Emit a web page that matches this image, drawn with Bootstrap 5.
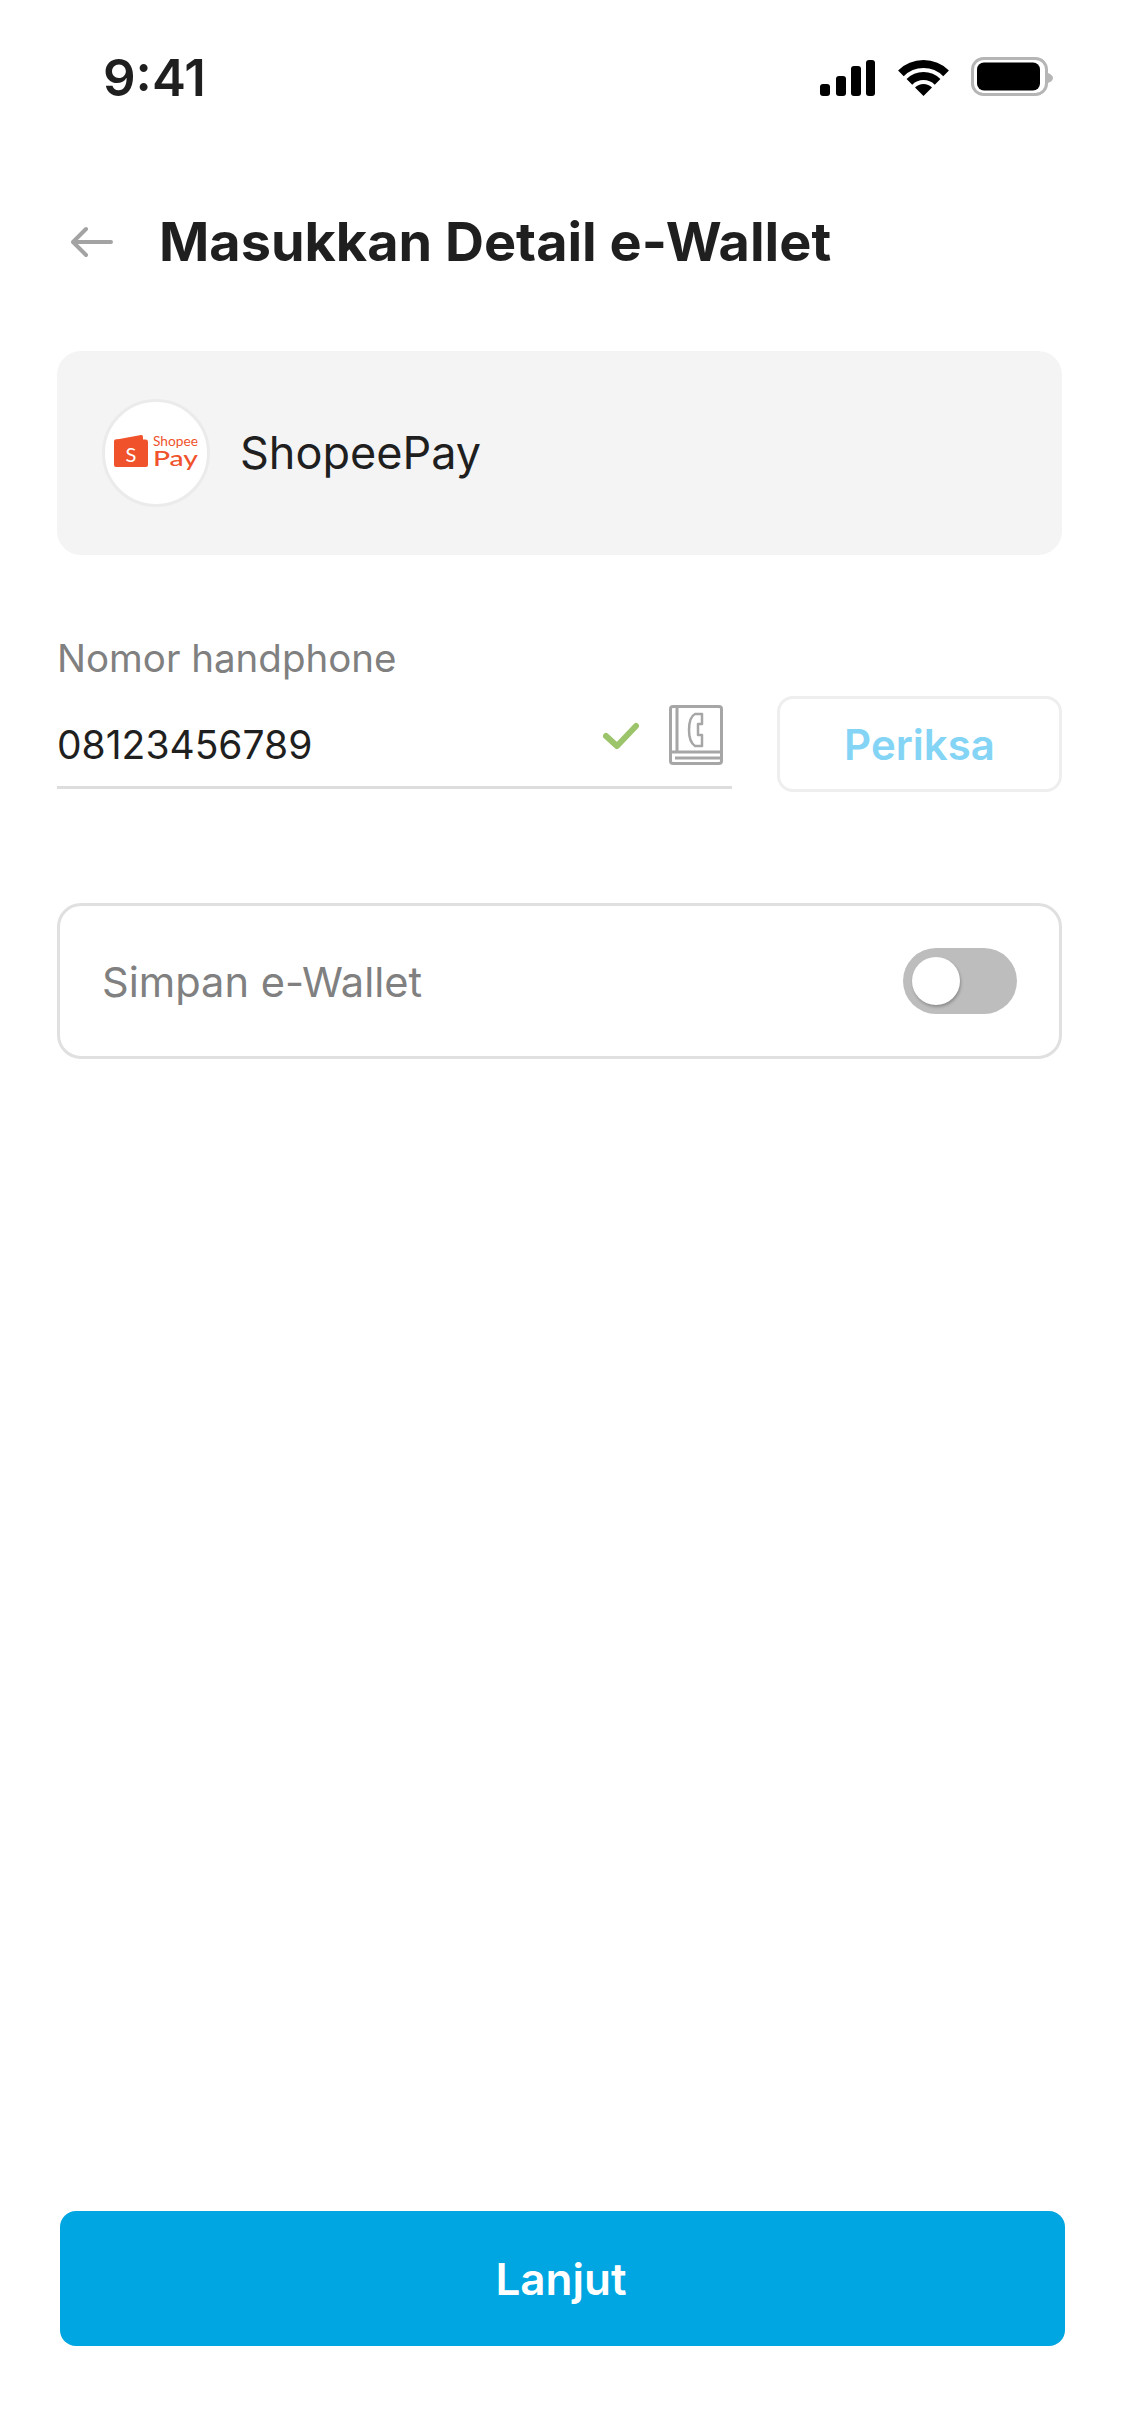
<!DOCTYPE html>
<html lang="id">
<head>
    <meta charset="utf-8">
    <title>Masukkan Detail e-Wallet</title>
    <link rel="stylesheet" href="https://cdn.jsdelivr.net/npm/bootstrap@5.3.0/dist/css/bootstrap.min.css">
    <style>
        body { font-family: Inter, "Liberation Sans", sans-serif; color: #1f1f1f; background: #fff; }
        .app-page { width: 1125px; height: 2436px; padding: 57px 63px 90px 57px; }

        /* status bar */
        .status-row { height: 39px; padding: 0 0 0 46px; margin-right: 9px; }
        .status-time { font-size: 51px; font-weight: 600; line-height: 43px; padding-top: 2px; }

        /* header */
        .page-head { margin-top: 106px; height: 80px; padding-left: 14px; gap: 46px; }
        .page-title { font-size: 54px; font-weight: 700; line-height: 80px; margin: 0; }

        /* wallet card */
        .wallet-box { height: 204px; margin-top: 69px; padding-left: 45px; gap: 30px; background: #f4f4f4; border-radius: 24px; }
        .wallet-logo { width: 108px; height: 108px; background: #fff; border: 3px solid #ebebeb; border-radius: 50%; }
        .wallet-name { font-size: 45px; }

        /* phone field */
        .field-label { margin-top: 81px; font-size: 38.5px; line-height: 44px; color: #808080; }
        .phone-row { margin-top: 20px; gap: 45px; }
        .phone-field { width: 675px; height: 89px; padding-right: 9px; border-bottom: 3px solid #ddd; }
        .phone-value { font-size: 39px; padding-top: 5px; }
        .check-mark { margin: 22px 30px 0 0; }
        .book-icon { margin-top: 5px; }
        .check-btn { width: 285px; height: 96px; margin-top: -4px; padding: 0; font-size: 42px; font-weight: 600; color: #84d4f5; background: #fff; border: 3px solid #eee; border-radius: 16px; }

        /* save toggle */
        .save-box { height: 156px; margin-top: 111px; padding: 0 42px 0 42px; border: 3px solid #e0e0e0; border-radius: 24px; }
        .save-text { font-size: 41.6px; color: #808080; padding-top: 3px; }
        .toggle-track { width: 114px; height: 66px; padding-left: 9px; background: #bdbdbd; border-radius: 33px; }
        .toggle-knob { width: 48px; height: 48px; background: #fff; border-radius: 50%; box-shadow: 1px 2px 3px rgba(0, 0, 0, .25); }

        /* bottom button */
        .next-btn { height: 135px; margin: auto -3px 0 3px; padding-right: 15px; font-size: 44px; font-weight: 600; color: #fff; background: #00a6e1; border: 0; border-radius: 16px; }
    </style>
</head>
<body>
    <div class="app-page d-flex flex-column">

        <!--Status Bar-->
        <div class="status-row d-flex justify-content-between align-items-center">
            <span class="status-time">9:41</span>
            <svg width="233" height="39" viewBox="0 0 233 39">
                <rect x="0" y="27" width="10" height="12" rx="3"/>
                <rect x="16" y="19" width="10" height="20" rx="3"/>
                <rect x="31" y="9" width="10" height="30" rx="3"/>
                <rect x="46" y="3" width="9" height="36" rx="3"/>
                <g fill="none" stroke="#000" stroke-width="8">
                    <path d="M80.9 16.4A32 32 0 0 1 126.1 16.4"/>
                    <path d="M89.4 24.9A20 20 0 0 1 117.6 24.9"/>
                </g>
                <path d="M95 30.5A12 12 0 0 1 112 30.5L103.5 39Z"/>
                <rect x="152.500" y="1.500" width="74" height="36" rx="11" fill="none" stroke="#b5b5b5" stroke-width="3"/>
                <rect x="157" y="5.500" width="63" height="28" rx="7"/>
                <path d="M228 16V26C231 25 233 23 233 21S231 17 228 16Z" fill="#b5b5b5"/>
            </svg>
        </div>

        <!--Header-->
        <div class="page-head d-flex align-items-center">
            <svg width="42" height="32" viewBox="0 0 42 32" fill="none" stroke="#a3a3a3" stroke-width="4" stroke-linecap="round" stroke-linejoin="round">
                <path d="M40 16H3M15 3 2 16l13 13"/>
            </svg>
            <h1 class="page-title">Masukkan Detail e-Wallet</h1>
        </div>

        <!--Selected Wallet-->
        <div class="wallet-box d-flex align-items-center">
            <div class="wallet-logo flex-shrink-0">
                <svg width="102" height="102" viewBox="3 3 102 102">
                    <path d="M12 41 39 36Q41 35.700 41 38V41Z" fill="#f0522b"/>
                    <path d="M12 42Q12 40.500 14 40.500H44Q46 40.500 46 43V66Q46 68 44 68H14Q12 68 12 66Z" fill="#f0522b"/>
                    <text x="29" y="63" text-anchor="middle" font-size="20" fill="#fff" font-family="Lato, sans-serif">S</text>
                    <text x="51" y="47" font-size="14" textLength="45" lengthAdjust="spacingAndGlyphs" fill="#f0522b" font-family="Lato, sans-serif">Shopee</text>
                    <text x="51" y="67" font-size="22" font-weight="500" textLength="45" lengthAdjust="spacingAndGlyphs" fill="#f0522b" font-family="Lato, sans-serif">Pay</text>
                </svg>
            </div>
            <span class="wallet-name">ShopeePay</span>
        </div>

        <!--Phone Number-->
        <div class="field-label">Nomor handphone</div>
        <div class="phone-row d-flex">
            <div class="phone-field d-flex align-items-center">
                <span class="phone-value me-auto">08123456789</span>
                <svg class="check-mark align-self-start" width="36" height="28" viewBox="0 0 36 28" fill="none" stroke="#9cc46a" stroke-width="6" stroke-linecap="round" stroke-linejoin="round">
                    <path d="M3 14 14 24 33 4"/>
                </svg>
                <svg class="book-icon align-self-start" width="54" height="60" viewBox="0 0 54 60" fill="none" stroke="#a6a6a6" stroke-width="3" stroke-linejoin="round">
                    <path d="M4 58.500Q1.500 58.500 1.500 56V4Q1.500 1.500 4 1.500H50Q52.500 1.500 52.500 4V56Q52.500 58.500 50 58.500Z"/>
                    <path d="M8 2V47M2 47H52M6 53H52"/>
                    <path d="M33 9H26Q20 12 20 25Q20 37 26 41H33V30H29V19H33Z" stroke-width="2.500"/>
                </svg>
            </div>
            <button class="check-btn btn" type="button">Periksa</button>
        </div>

        <!--Save Wallet-->
        <div class="save-box d-flex align-items-center justify-content-between">
            <span class="save-text">Simpan e-Wallet</span>
            <div class="toggle-track d-flex align-items-center">
                <div class="toggle-knob"></div>
            </div>
        </div>

        <button class="next-btn btn w-100" type="button">Lanjut</button>
    </div>

    <script src="https://cdn.jsdelivr.net/npm/bootstrap@5.3.0/dist/js/bootstrap.bundle.min.js"></script>
</body>
</html>
